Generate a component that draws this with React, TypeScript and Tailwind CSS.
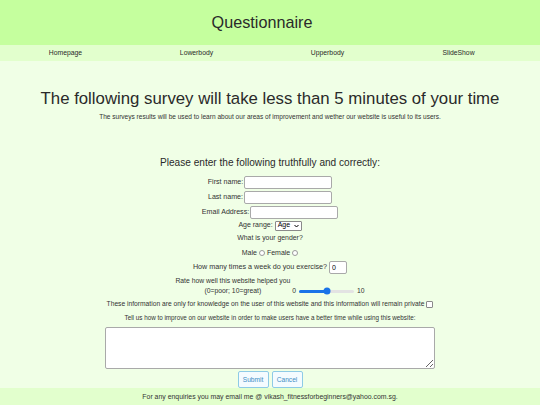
import React from "react";

const font = { fontFamily: '"Liberation Sans", Arial, sans-serif' };

function TextRow({ label, inputClass = "w-[88px]" }: { label: string; inputClass?: string }) {
  return (
    <div className="flex h-[14px] items-center justify-center gap-[1px]">
      <label className="text-[7.1px] text-[#333]">{label}</label>
      <input type="text" className={`h-[13px] rounded-[2px] border border-[#a9a9a9] bg-white px-[2px] text-[7px] ${inputClass}`} />
    </div>
  );
}

function Radio({ label }: { label: string }) {
  return (
    <span className="flex items-center gap-[2px] leading-none">
      <span>{label}</span>
      <span className="size-[6px] rounded-full border border-[#9a9a9a] bg-white" />
    </span>
  );
}

export default function App() {
  const rating = 5;
  return (
    <div style={font} className="flex min-h-[405px] w-[540px] flex-col bg-[#f0ffe6] text-[#333]">
      {/* header */}
      <header className="flex h-[45px] items-center justify-center bg-[#c5ff9e] pr-[16px]">
        <h1 className="text-[16.2px] text-[#2a2a2a]">Questionnaire</h1>
      </header>
      <nav className="grid h-[16px] grid-cols-[131px_131px_131px_131px] items-center bg-[#e2ffcd] text-[6.8px] text-[#2a2a2a]">
        <a className="text-center">Homepage</a>
        <a className="text-center">Lowerbody</a>
        <a className="text-center">Upperbody</a>
        <a className="text-center">SlideShow</a>
      </nav>

      {/* intro */}
      <h2 className="mt-[26px] text-center text-[16.8px] leading-[24px] text-[#2a2a2a]">
        The following survey will take less than 5 minutes of your time
      </h2>
      <p className="text-center text-[6.55px] leading-[11px]">
        The surveys results will be used to learn about our areas of improvement and wether our website is useful to its users.
      </p>

      {/* form */}
      <form className="flex flex-col items-center">
        <h3 className="mt-[34px] h-[14px] text-center text-[10.1px] leading-[14px] text-[#2a2a2a]">
          Please enter the following truthfully and correctly:
        </h3>
        <div className="mt-[5px] flex flex-col gap-[1px]">
          <TextRow label="First name:" />
          <TextRow label="Last name:" />
          <TextRow label="Email Address:" />
        </div>
        <div className="flex h-[13px] items-center justify-center gap-[2px] text-[7px]">
          <span>Age range:</span>
          <span className="flex h-[10px] w-[27px] items-center justify-between rounded-[1px] border border-[#8a8a8a] bg-white px-[2px] text-[7px] text-black">
            Age
            <svg width="5" height="4" viewBox="0 0 10 6" className="fill-none stroke-black stroke-[2]">
              <path d="M1 1l4 4 4-4" />
            </svg>
          </span>
        </div>
        <div className="flex h-[13px] items-center text-[6.9px]">What is your gender?</div>
        <div className="mt-[1px] flex h-[13px] items-center gap-[2px] text-[7px]">
          <Radio label="Male" />
          <Radio label="Female" />
        </div>
        <div className="mt-[1px] flex h-[14px] items-center gap-[2px] text-[7.2px]">
          <span>How many times a week do you exercise?</span>
          <input type="text" defaultValue="0" className="h-[13px] w-[18px] rounded-[2px] border border-[#a9a9a9] bg-white px-[2px] text-[7px] text-black" />
        </div>
        <div className="mt-[2px] flex items-end gap-[2px] text-[6.8px] leading-[10px]">
          <label className="flex flex-col items-center">
            <span>Rate how well this website helped you</span>
            <span>(0=poor; 10=great)</span>
          </label>
          <span className="flex h-[10px] items-center gap-[3px]">
            <span>0</span>
            <span className="relative flex h-[3px] w-[55px] rounded-full bg-[#e3e3e3]">
              <span className="h-full rounded-full bg-[#1a73e8]" style={{ width: `${rating * 10}%` }} />
              <span
                className="absolute top-1/2 size-[7px] -translate-x-1/2 -translate-y-1/2 rounded-full bg-[#1a73e8]"
                style={{ left: `${rating * 10}%` }}
              />
            </span>
            <span>10</span>
          </span>
        </div>
        <div className="mt-[3px] flex h-[10px] items-center gap-[2px] text-[6.7px]">
          <span>These information are only for knowledge on the user of this website and this information will remain private</span>
          <span className="size-[7px] rounded-[1px] border border-[#8a8a8a] bg-white" />
        </div>
        <p className="mt-[4px] flex h-[10px] items-center text-[6.3px]">
          Tell us how to improve on our website in order to make users have a better time while using this website:
        </p>
        <textarea className="mt-[4px] h-[42px] w-[330px] rounded-[2px] border border-[#a9a9a9] bg-white" />
        <div className="mt-[2px] flex gap-[3px]">
          <button type="button" className="h-[17px] w-[31px] rounded-[2px] border border-[#8ecbe6] bg-[#f4fbff] text-[6.6px] text-[#3d8dc4]">
            Submit
          </button>
          <button type="button" className="h-[17px] w-[31px] rounded-[2px] border border-[#8ecbe6] bg-[#f4fbff] text-[6.6px] text-[#3d8dc4]">
            Cancel
          </button>
        </div>
      </form>

      <footer className="mt-auto flex h-[19px] items-center justify-center bg-[#e2ffcd] text-[6.9px]">
        For any enquiries you may email me @ vikash_fitnessforbeginners@yahoo.com.sg.
      </footer>
    </div>
  );
}
